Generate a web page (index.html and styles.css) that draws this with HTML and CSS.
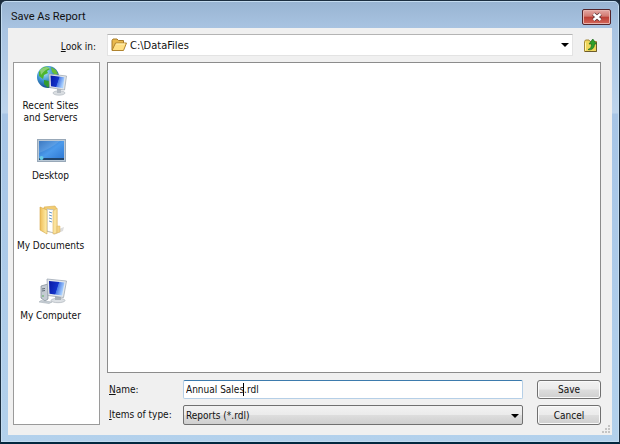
FILE: index.html
```html
<!DOCTYPE html>
<html lang="en">
<head>
  <meta charset="UTF-8">
  <title>Save As Report</title>
  <link rel="stylesheet" href="styles.css">
</head>
<body>
  <form class="dialog">
    <header class="titlebar">
      <h1>Save As Report</h1>
      <button type="button" class="close" aria-label="Close">
        <svg width="12" height="10" viewBox="0 0 12 10">
          <path d="M2.500 2L9.500 8M9.500 2L2.500 8" stroke="#5b3436" stroke-width="4"/>
          <path d="M2.500 2L9.500 8M9.500 2L2.500 8" stroke="#fff" stroke-width="2.400"/>
        </svg>
      </button>
    </header>

    <main class="client">
      <div class="look-in">
        <label for="folder"><u>L</u>ook in:</label>
        <div class="combo combo-folder">
          <svg class="combo-icon" width="16" height="14" viewBox="0 0 16 14">
            <path d="M1 12V2.500L2 1h4l1.500 1.500H12.500V6" fill="#e9b94c" stroke="#a57a2b"/>
            <path d="M1 12.500L4.500 5H15.500L12.500 12.500Z" fill="#ffdf83" stroke="#b08430"/>
            <path d="M5.200 6H14" stroke="#fff3bd"/>
          </svg>
          <select id="folder"><option>C:\DataFiles</option></select>
          <svg class="arrow" width="8" height="4" viewBox="0 0 8 4"><path d="M0 0H8L4 4Z"/></svg>
        </div>
        <button type="button" class="up" aria-label="Up one level">
          <svg width="15" height="15" viewBox="0 0 15 15">
            <path d="M1.500 13.500V3.500L2.500 2H6L7 3.500H13.500V13.500Z" fill="#efd75c" stroke="#a3893a"/>
            <path d="M2.500 4.500V12.500" stroke="#fff6b0"/>
            <path d="M2 13.500H13.500V4" fill="none" stroke="#6d5c2c"/>
            <path d="M5 11.500C7.500 11 8.500 9 8.500 6H6L9.800 1L13.500 6H11.500C11.500 10 9 12.500 5 11.500Z" fill="#2fa02c" stroke="#1f6c1f" stroke-width=".7"/>
          </svg>
        </button>
      </div>

      <div class="content">
        <nav class="places">
          <button type="button" class="place">
            <svg width="32" height="32" viewBox="0 0 32 32">
              <defs>
                <radialGradient id="globe" cx=".35" cy=".3" r=".75">
                  <stop offset="0" stop-color="#b4e7fa"/><stop offset=".5" stop-color="#3c93d0"/><stop offset="1" stop-color="#123f84"/>
                </radialGradient>
                <linearGradient id="screen" x1="0" y1="0" x2="1" y2=".3">
                  <stop offset="0" stop-color="#0718a4"/><stop offset=".6" stop-color="#1434ca"/><stop offset=".64" stop-color="#4c7be5"/><stop offset="1" stop-color="#a9d1ff"/>
                </linearGradient>
              </defs>
              <circle cx="13" cy="13" r="11" fill="url(#globe)"/>
              <path d="M4 8C6 4 9 2 13 3L15 5L12 7L13 9L9 11L8 15L4 12Z" fill="#4db52d"/>
              <path d="M16 3L21 6L23 10L20 11L17 8Z" fill="#68be38"/>
              <path d="M9 16L14 17L15 20L13 24L9 20Z" fill="#359c2f"/>
              <path d="M5 6Q10 1 16 4Q10 5 6 11Z" fill="#fff" opacity=".35"/>
              <ellipse cx="24" cy="29" rx="6" ry="2.200" fill="#d9dde1" stroke="#a8b0b8" stroke-width=".6"/>
              <path d="M22 24L26 25L26 29H22Z" fill="#b3bac2"/>
              <path d="M14 10L31.500 12L29.500 26L14.500 23.500Z" fill="#e2e6ea" stroke="#9aa4ae" stroke-width=".7"/>
              <path d="M15.500 11.500L29.500 13.200L28 24.200L16 22.200Z" fill="url(#screen)"/>
            </svg>
            <span>Recent Sites<br>and Servers</span>
          </button>
          <button type="button" class="place">
            <svg width="32" height="32" viewBox="0 0 32 32">
              <defs>
                <linearGradient id="desk" x1="0" y1="0" x2="1" y2="1">
                  <stop offset="0" stop-color="#2166b8"/><stop offset=".5" stop-color="#4c9aeb"/><stop offset="1" stop-color="#2c76d2"/>
                </linearGradient>
              </defs>
              <rect x="2.500" y="5.500" width="28" height="22" fill="#bac9d7" stroke="#98a8b8"/>
              <rect x="4" y="7" width="25" height="19" fill="url(#desk)"/>
              <path d="M4 7H25Q15 15 4 19Z" fill="#fff" opacity=".13"/>
              <path d="M4 24H29V26H4Z" fill="#21456c"/>
              <circle cx="6.500" cy="24" r="2" fill="#66cce6"/>
            </svg>
            <span>Desktop</span>
          </button>
          <button type="button" class="place">
            <svg width="32" height="32" viewBox="0 0 32 32">
              <defs>
                <linearGradient id="paper"><stop offset="0" stop-color="#efbd57"/><stop offset="1" stop-color="#fff0ae"/></linearGradient>
              </defs>
              <path d="M19 27L29 23L28 27L19 31Z" fill="#cbcbcb" opacity=".65"/>
              <path d="M9 3L20 2L22 5V29L9 27Z" fill="#f2cc72" stroke="#d9ae52" stroke-width=".6"/>
              <path d="M12 5L19 6V29L12 27Z" fill="#fff" stroke="#a3b5c8" stroke-width=".7"/>
              <path d="M14 8L17 9M14 11L17 12M14 14L17 15M14 17L17 18" stroke="#6898c8"/>
              <path d="M5 3L12 6V30L5 26Z" fill="url(#paper)" stroke="#d4a647" stroke-width=".6"/>
              <path d="M18 7L22 4V29L18 30Z" fill="#fae29c" stroke="#dbb35d" stroke-width=".6"/>
              <path d="M22 22L25 22V28L22 29Z" fill="#f4d484" stroke="#d8b363" stroke-width=".5"/>
            </svg>
            <span>My Documents</span>
          </button>
          <button type="button" class="place">
            <svg width="32" height="32" viewBox="0 0 32 32">
              <path d="M6 12L13 10V25L10 27L6 24Z" fill="#c4cbd2" stroke="#7c8892" stroke-width=".7"/>
              <path d="M7 15L10 14.500M7 17L10 16.500" stroke="#5f6a74"/>
              <circle cx="8" cy="22" r=".8" fill="#4cac4c"/>
              <ellipse cx="23" cy="26.500" rx="7" ry="2.200" fill="#dce0e4" stroke="#a0a8b0" stroke-width=".6"/>
              <path d="M20 20H26V26H20Z" fill="#aab2ba"/>
              <path d="M12 5L31.500 7L28.500 23.500L13 21.500Z" fill="#e4e8ec" stroke="#949eaa" stroke-width=".7"/>
              <path d="M14 7L29.500 8.500L27 21.500L14.500 19.700Z" fill="url(#screen)"/>
              <path d="M6 26.500L17 28L14 29.500L4 28Z" fill="#c8cfd6" stroke="#9aa4ad" stroke-width=".5"/>
            </svg>
            <span>My Computer</span>
          </button>
        </nav>

        <section class="browse">
          <div class="files"></div>
          <div class="fields">
            <label for="name"><u>N</u>ame:</label>
            <div class="name-box">
              <input type="text" id="name" value="Annual Sales.rdl">
              <span class="caret"></span>
            </div>
            <button type="submit" class="btn">Save</button>

            <label for="type"><u>I</u>tems of type:</label>
            <div class="combo combo-type">
              <select id="type"><option>Reports (*.rdl)</option></select>
              <svg class="arrow" width="8" height="4" viewBox="0 0 8 4"><path d="M0 0H8L4 4Z"/></svg>
            </div>
            <button type="button" class="btn">Cancel</button>
          </div>
        </section>
      </div>

      <svg class="grip" width="9" height="9" viewBox="0 0 9 9">
        <path d="M6 0h2v2h-2zM3 3h2v2h-2zM6 3h2v2h-2zM0 6h2v2h-2zM3 6h2v2h-2zM6 6h2v2h-2z" fill="#c4c4c4"/>
      </svg>
    </main>
  </form>
</body>
</html>
```

FILE: styles.css
```css
* {
  box-sizing: border-box;
}

body {
  margin: 0;
  background: #1c2c3c;
  color: #111;
  font-family: "DejaVu Sans Condensed", "DejaVu Sans", sans-serif;
  font-size: 10px;
  line-height: 13px;
}

button, input, select {
  font: inherit;
  color: inherit;
  margin: 0;
}

.dialog {
  display: flex;
  flex-direction: column;
  min-height: 100vh;
  padding: 0 7px 7px;
  border: 1px solid #1b2e40;
  border-bottom: 2px solid #02283f;
  border-radius: 6px 6px 0 0;
  background: linear-gradient(#98b4d2, #a9c4e2 28px, #bdd4ec 112px, #a7c5e6 113px, #b3d1ec);
  box-shadow: inset 0 0 0 1px #c4dcf0;
}

.titlebar {
  display: flex;
  justify-content: space-between;
  align-items: center;
  height: 27px;
  padding: 4px 1px 0 3px;
}

.titlebar h1 {
  margin: 0;
  font-family: Roboto, sans-serif;
  font-size: 11px;
  font-weight: normal;
}

.close {
  display: flex;
  align-items: center;
  justify-content: center;
  width: 29px;
  height: 16px;
  padding: 0;
  border: 1px solid #54252b;
  border-radius: 2px;
  background: linear-gradient(#e4a9a4, #d27970 45%, #bb3e34 50%, #d5685b);
  box-shadow: inset 0 0 0 1px #e8b3ad;
}

.client {
  position: relative;
  flex: 1;
  display: flex;
  flex-direction: column;
  gap: 6px;
  padding: 6px 11px 10px 5px;
  background: #f0f0f0;
}

.look-in {
  display: flex;
  align-items: center;
  height: 22px;
}

.look-in label {
  width: 94px;
  padding: 3px 11px 0 0;
  text-align: right;
}

.combo {
  position: relative;
}

.combo select {
  display: block;
  width: 100%;
  height: 100%;
  appearance: none;
  border-radius: 0;
}

.combo-folder {
  flex: 1;
  height: 22px;
}

.combo-folder select {
  padding: 0 20px 0 22px;
  border: 1px solid #e3e3e3;
  border-top-color: #b4b4b4;
  background: #fff;
  font-size: 11px;
}

.combo-icon {
  position: absolute;
  left: 4px;
  top: 4px;
}

.arrow {
  position: absolute;
  right: 4px;
  top: 9px;
  pointer-events: none;
}

.up {
  width: 28px;
  height: 22px;
  padding: 0 0 0 10px;
  border: 0;
  background: none;
}

.up svg {
  display: block;
}

.content {
  flex: 1;
  display: flex;
  gap: 7px;
}

.places {
  width: 87px;
  padding: 1px 12px 0 0;
  border: 1px solid #9a9a9a;
  background: #fff;
}

.place {
  display: flex;
  flex-direction: column;
  align-items: center;
  gap: 4px;
  width: 100%;
  height: 70px;
  padding: 0;
  border: 0;
  background: none;
  line-height: 12px;
  white-space: nowrap;
}

.browse {
  flex: 1;
  display: flex;
  flex-direction: column;
  gap: 7px;
}

.files {
  flex: 1;
  border: 1px solid #8c8c8c;
  background: #fff;
}

.fields {
  display: grid;
  grid-template-columns: 76px 1fr 78px;
  grid-template-rows: 19px 20px;
  row-gap: 6px;
}

.fields label {
  padding: 3px 2px;
  white-space: nowrap;
}

.name-box {
  position: relative;
}

.name-box input {
  display: block;
  width: 100%;
  height: 100%;
  padding: 0 2px;
  border: 1px solid #b5cfe7;
  border-top-color: #3d7bad;
  border-radius: 2px;
  background: #fff;
  outline: none;
}

.caret {
  position: absolute;
  left: 60px;
  top: 3px;
  width: 1px;
  height: 13px;
  background: #000;
}

.combo-type select {
  padding: 0 20px 0 2px;
  border: 1px solid #707070;
  border-radius: 2px;
  background: linear-gradient(#f2f2f2, #ebebeb 48%, #dddddd 52%, #cfcfcf);
}

.btn {
  margin-left: 14px;
  width: 64px;
  padding: 0;
  border: 1px solid #707070;
  border-radius: 3px;
  background: linear-gradient(#f2f2f2, #ebebeb 48%, #dddddd 52%, #cfcfcf);
  box-shadow: inset 0 0 0 1px #fafafa;
}

.grip {
  position: absolute;
  right: 1px;
  bottom: 1px;
}
```
